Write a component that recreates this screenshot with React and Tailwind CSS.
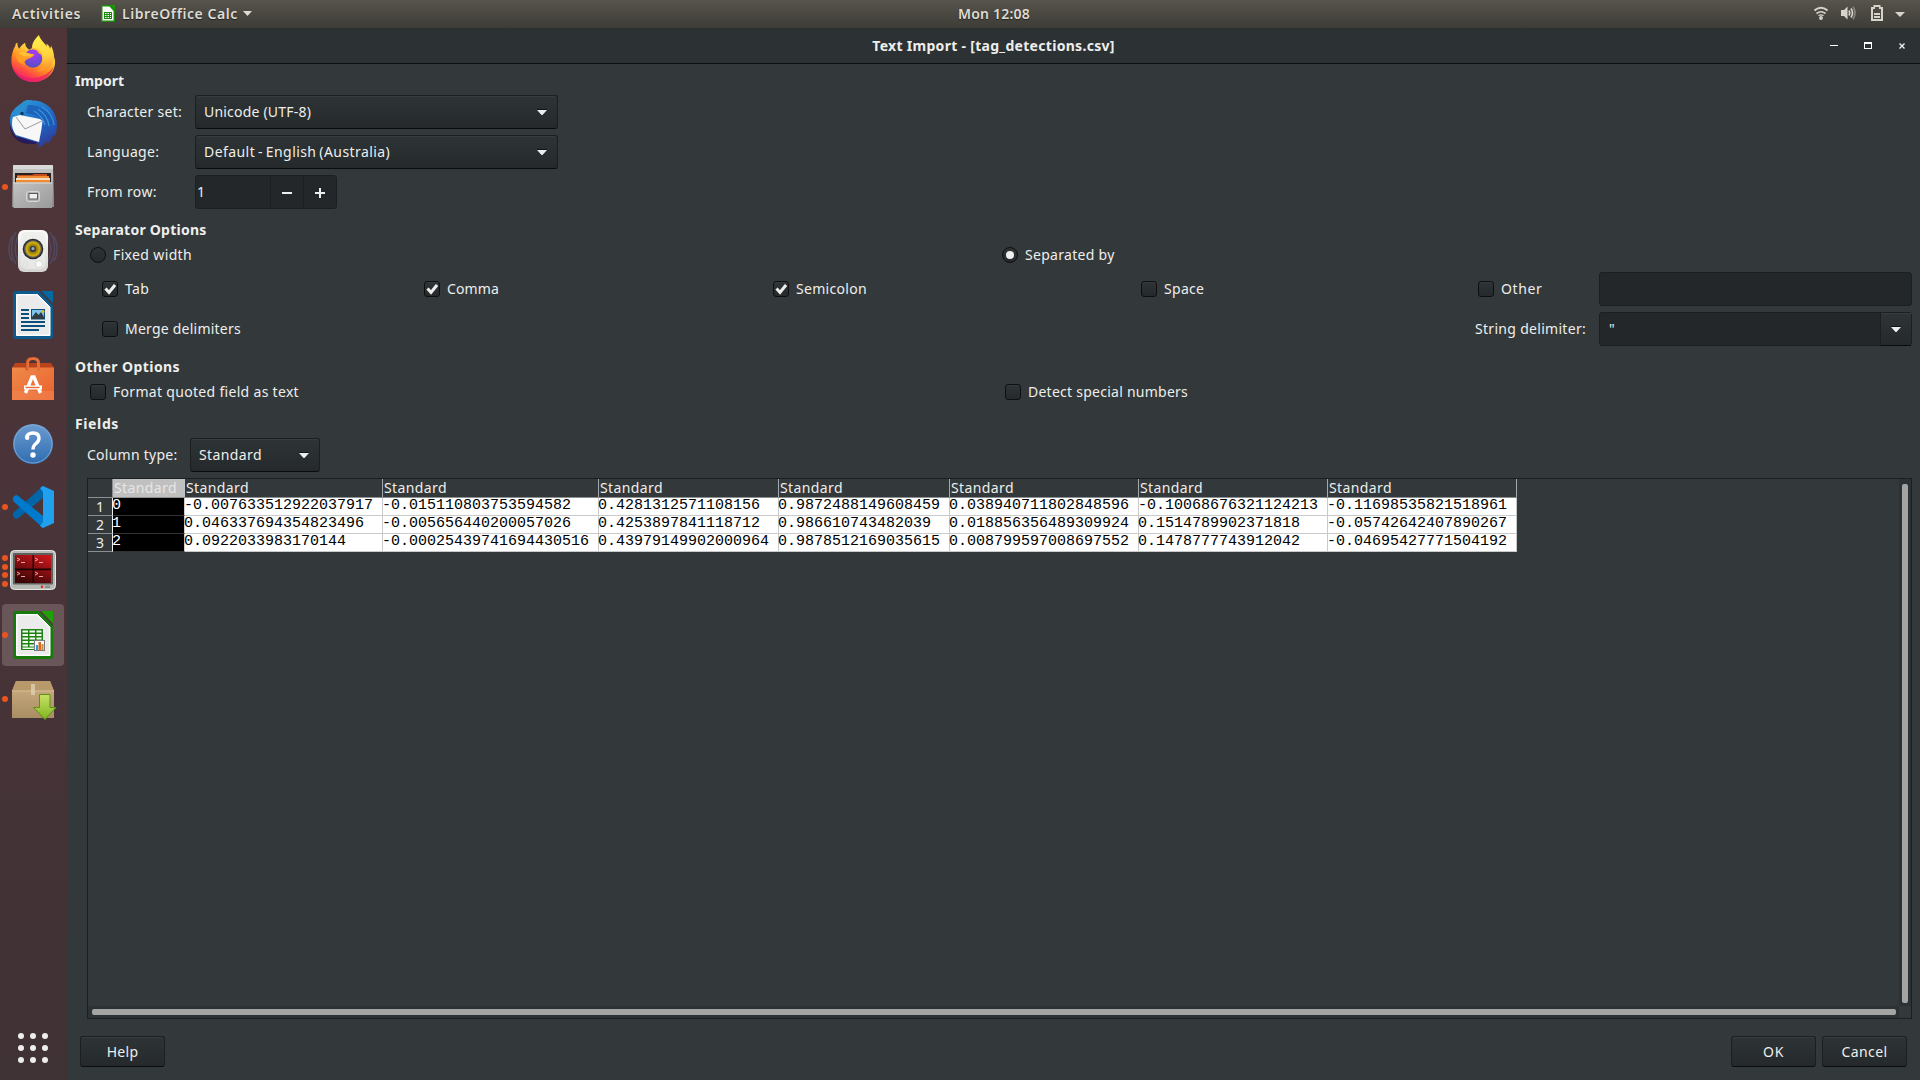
import React from "react";

function Firefox() {
  return (
    <svg width="48" height="48" viewBox="0 0 48 49" className="-mt-px">
      <defs>
        <linearGradient id="ffBody" x1="0.8" y1="0.05" x2="0.25" y2="1">
          <stop offset="0" stopColor="#fff44f" />
          <stop offset="0.3" stopColor="#ffc83a" />
          <stop offset="0.55" stopColor="#ff8a1e" />
          <stop offset="0.8" stopColor="#ff3f4e" />
          <stop offset="1" stopColor="#e01b78" />
        </linearGradient>
        <radialGradient id="ffGlobe" cx="0.55" cy="0.2" r="0.9">
          <stop offset="0" stopColor="#a83bf2" />
          <stop offset="0.55" stopColor="#7446da" />
          <stop offset="1" stopColor="#4a52b4" />
        </radialGradient>
        <linearGradient id="ffFlame" x1="0.5" y1="0" x2="0.6" y2="1">
          <stop offset="0" stopColor="#fff04d" />
          <stop offset="0.55" stopColor="#ffd53f" />
          <stop offset="1" stopColor="#ff8a2a" />
        </linearGradient>
      </defs>
      <path d="M29 10c2 2 5 4 8 5l2 4 4-1c3 5 3.500 6 3.500 10C46.500 39.500 36 48 24.500 48S2.500 39 2 27.500C1.800 20 4 14 6 11c0-2 1-3 2-3 0 3 1 5 2 6 1-2 4-5 6-6 0 3 1 5 4 7z" fill="url(#ffBody)" />
      <path d="M30 0c-4 4-7 8-7 13l7 3c5 4 6 7 5 12-1 5-4 8-8 9 9 2 18.500-4 18.500-14 0-4-1-8-3-12l-1 3c-1-3-2-4-4-5l1 3c-3-4-7-7-8.500-12z" fill="url(#ffFlame)" />
      <circle cx="24" cy="24" r="9.500" fill="url(#ffGlobe)" />
      <path d="M6 19c3-4 8-3 12-1 2 1 5 1 7.500 2-1 2-4 4-7 4.500-2 1-4 3-3 6-6-1-9-6-9.500-11.500z" fill="#ff9d25" />
      <path d="M9 18c4-2 7-1 10 1l6 1-4 2c-4 0-8 0-12-4z" fill="#ffc033" />
      <path d="M22 13c6 0 10 3 12 8l-4-2-2-3z" fill="#ffb52b" />
      <path d="M3 32c3 8 11 12 20 12 10 0 18-5 22-12-2 9-10 16-20.500 16S5 42 3 32z" fill="#e8186f" opacity="0.650" />
    </svg>
  );
}

function Thunderbird() {
  return (
    <svg width="50" height="50" viewBox="0 0 50 50" className="mt-0.5">
      <defs>
        <linearGradient id="tbBody" x1="0.2" y1="0" x2="0.8" y2="1">
          <stop offset="0" stopColor="#2a9bdc" />
          <stop offset="0.5" stopColor="#2068c4" />
          <stop offset="1" stopColor="#2f3a98" />
        </linearGradient>
      </defs>
      <path d="M15 3c3-2 6-2.500 9-1.500C38 1 49 12 49 26c0 5-1 9-3 12l-1-2c-1 4-3 7-6 9v-3c-3 4-6 6-10 6.500l3-4C24 45 12 42 7 36 2 31 1 22 3 15c3-6 7-8 12-12z" fill="url(#tbBody)" />
      <path d="M15 3c3-2 6-2.500 9-1.500-3 1-6 4-7 8-1 6-7 8-10 9 0-6 3-11 8-15.500z" fill="#2b8fcf" />
      <path d="M20 6c14 0 25 8 27 20l-4 9V26l-5 10-2-14-9-6-9-2z" fill="#1c5cb4" opacity="0.800" />
      <path d="M34 8c7 4 11 10 12 18M30 10c6 4 10 9 11 17M26 12c5 3 9 7 11 14" fill="none" stroke="#3a92dc" strokeWidth="1.300" />
      <path d="M2 24c1 10 6 16 14 19l6 2C10 45 2 36 2 26z" fill="#1f1552" />
      <path d="M3 27l5 10 22 7-3 1C14 45 6 38 3 27z" fill="#241a5e" />
      <path d="M5 18l7-2 20 4 2.500 2-1 8-2.500 13L8 36c-4-5-5-12-3-18z" fill="#f7f7f8" />
      <path d="M8 18l9 12 17-8" fill="none" stroke="#9a9ca0" strokeWidth="1" />
      <circle cx="14" cy="14.500" r="1.800" fill="#123a63" />
    </svg>
  );
}

function Files() {
  return (
    <svg width="44" height="46" viewBox="0 0 44 46">
      <defs>
        <linearGradient id="fiBack" x1="0" y1="0" x2="0" y2="1">
          <stop offset="0" stopColor="#c9c9c9" />
          <stop offset="1" stopColor="#8c8c8c" />
        </linearGradient>
        <linearGradient id="fiFront" x1="0" y1="0" x2="1" y2="1">
          <stop offset="0" stopColor="#c2c2c2" />
          <stop offset="1" stopColor="#9a9a9a" />
        </linearGradient>
      </defs>
      <path d="M2 2q0-1 1-1h38q1 0 1 1l1 41H1z" fill="url(#fiBack)" />
      <path d="M2 5h40V2q0-1-1-1H3q-1 0-1 1z" fill="#d9d9d9" />
      <path d="M4 9h36v10H4z" fill="#2a211e" />
      <path d="M6 11h15l2-1h13v3H6z" fill="#c44f1c" />
      <path d="M6 12h32v2H6zM5 16h34v3H5z" fill="#ef8a35" />
      <path d="M5 14h34v2H5z" fill="#f7ddbf" />
      <path d="M2.500 18.500h38.500v25.500H2.500z" fill="url(#fiFront)" />
      <path d="M2.500 18.500h38.500v1H2.500z" fill="#dedede" />
      <rect x="15.500" y="27.500" width="13" height="10" rx="2" fill="#b3b3b3" stroke="#d6d6d6" />
      <rect x="18" y="29.500" width="8.500" height="5.500" fill="#f0f0f0" stroke="#5b5b5b" />
    </svg>
  );
}

function Speaker() {
  return (
    <svg width="50" height="46" viewBox="0 0 50 46">
      <defs>
        <linearGradient id="spBox" x1="0" y1="0" x2="0" y2="1">
          <stop offset="0" stopColor="#fbfbfb" />
          <stop offset="1" stopColor="#d4d4d2" />
        </linearGradient>
      </defs>
      <g fill="none" stroke="#5671a8" strokeWidth="1.500" opacity="0.350">
        <path d="M8 4C2 14 2 28 8 36M4 8c-4 9-4 18 0 25M11 7C6 15 6 27 11 35M42 4c6 10 6 24 0 32M46 8c4 9 4 18 0 25M39 7c5 8 5 20 0 28" />
      </g>
      <rect x="10" y="2" width="30" height="42" rx="6" fill="url(#spBox)" />
      <rect x="13" y="4" width="24" height="37" rx="5" fill="#ececea" opacity="0.700" />
      <circle cx="25" cy="21" r="10.300" fill="#2b2c31" />
      <circle cx="25" cy="21" r="9" fill="#56585e" />
      <circle cx="25" cy="21" r="7.700" fill="#cba90e" />
      <circle cx="25" cy="21" r="5.500" fill="#a98a08" />
      <circle cx="25" cy="21" r="3.300" fill="#3c3f46" />
      <circle cx="25" cy="20.500" r="1.500" fill="#a7abb3" />
      <circle cx="31" cy="36" r="3.500" fill="#fafafa" stroke="#cfcfcf" strokeWidth="0.700" />
      <rect x="15" y="34" width="4" height="5" fill="none" stroke="#dadada" strokeWidth="0.700" />
    </svg>
  );
}

function DocShape({ dark, corner }) {
  return (
    <g>
      <path d="M3 0h23l14 14v31q0 3-3 3H3q-3 0-3-3V3q0-3 3-3z" fill={dark} />
      <path d="M28 0h12v12.500z" fill={corner} />
      <path d="M26 0h2l12 12.500V15z" fill="#493437" opacity="0.750" />
      <path d="M3.500 3.500h21l12.500 12.500v28.500H3.500z" fill="#f3f3f3" stroke="#ffffff" strokeWidth="1" />
      <path d="M5 5h19l12 12v26H5z" fill="#e9e9e9" opacity="0.800" />
    </g>
  );
}

function Writer() {
  return (
    <svg width="40" height="48" viewBox="0 0 40 48">
      <DocShape dark="#0d5a8c" corner="#0369a3" />
      <path d="M8 18h8v2H8zM8 22h8v2H8zM8 26h8v2H8zM8 30h24v2H8zM8 34h24v2H8zM8 38h18v2H8z" fill="#0b4f7c" />
      <rect x="18.500" y="18.500" width="13" height="9.500" fill="#7cc4ea" stroke="#0b4f7c" />
      <path d="M19 28v-2l4-5 2.500 3 2.500-3 3 5v2z" fill="#2f3c44" />
      <circle cx="30" cy="20.500" r="1.500" fill="#e9b52a" />
    </svg>
  );
}

function Calc() {
  return (
    <svg width="40" height="48" viewBox="0 0 40 48">
      <DocShape dark="#187a0c" corner="#1fa003" />
      <rect x="8" y="18" width="22" height="21" fill="#1d8410" />
      <g fill="#f4f8f3">
        {[19.5, 23, 26.5, 30, 33.5].map((y) => (
          <g key={y}>
            <rect x="9.500" y={y} width="5.500" height="2" />
            <rect x="16.500" y={y} width="5.500" height="2" />
            <rect x="23.500" y={y} width="5" height="2" />
          </g>
        ))}
        <rect x="9.500" y="36.500" width="12" height="1.500" />
      </g>
      <rect x="21.500" y="29.500" width="10" height="10" fill="#fafafa" stroke="#7b7b7b" />
      <path d="M23 34h2v5h-2z" fill="#2d9bd8" />
      <path d="M25.500 31h2.500v8h-2.500z" fill="#e0641a" />
      <path d="M28.500 33h2v6h-2z" fill="#c08a3e" />
    </svg>
  );
}

function Software() {
  return (
    <svg width="42" height="44" viewBox="0 0 42 44">
      <defs>
        <linearGradient id="swBag" x1="0" y1="0" x2="1" y2="1">
          <stop offset="0" stopColor="#f08a4b" />
          <stop offset="1" stopColor="#e9602c" />
        </linearGradient>
      </defs>
      <path d="M3 6h36l3 5H0z" fill="#b9431a" />
      <path d="M0 10.500h42V43H0z" fill="url(#swBag)" />
      <path d="M0 34h42v9H0z" fill="#f28a55" opacity="0.500" />
      <path d="M15.500 14V6q0-4.500 5.500-4.500T26.500 6v8" fill="none" stroke="#e5703a" strokeWidth="3" />
      <path d="M14 13V6q0-6 7-6" fill="none" stroke="#b5461c" strokeWidth="0.800" />
      <path d="M13.500 36l6.500-16h2l6.500 16" fill="none" stroke="#fff" strokeWidth="3.400" />
      <path d="M12 30.500h18" stroke="#fff" strokeWidth="4" />
      <path d="M13.500 30.500h14" stroke="#ea6a35" strokeWidth="1.400" />
    </svg>
  );
}

function HelpIcon() {
  return (
    <svg width="42" height="42" viewBox="0 0 42 42" className="mt-0.5">
      <defs>
        <linearGradient id="hpDisc" x1="0" y1="0" x2="0" y2="1">
          <stop offset="0" stopColor="#6b9bd0" />
          <stop offset="1" stopColor="#2f6db0" />
        </linearGradient>
      </defs>
      <circle cx="21" cy="21" r="20" fill="url(#hpDisc)" />
      <circle cx="21" cy="21" r="19" fill="none" stroke="#8db3dd" strokeWidth="1" opacity="0.700" />
      <path d="M14.500 15q0.500-5 6.500-5t6 5.200q0 3-3 5.300t-3 6" fill="none" stroke="#fff" strokeWidth="3.400" />
      <circle cx="15.200" cy="14.700" r="2.200" fill="#fff" />
      <circle cx="21" cy="32" r="2.700" fill="#fff" />
    </svg>
  );
}

function Code() {
  return (
    <svg width="42" height="42" viewBox="0 0 42 42">
      <path d="M31 0L1 27v3q1 3 4 3L31 12z" fill="#0065a9" />
      <path d="M31 42L1 15v-3q1-3 4-3l26 21z" fill="#007acc" />
      <path d="M31 0l11 5v32l-11 5-3-2 3-4V6l-3-4z" fill="#22a0f0" />
    </svg>
  );
}

function Terminal() {
  return (
    <svg width="46" height="42" viewBox="0 0 46 42">
      <defs>
        <linearGradient id="tmRed" x1="0.8" y1="0" x2="0.3" y2="1">
          <stop offset="0" stopColor="#c9171c" />
          <stop offset="1" stopColor="#3a0506" />
        </linearGradient>
      </defs>
      <rect x="0.500" y="0.500" width="45" height="39" rx="4" fill="#b8bab5" stroke="#e3e4e0" />
      <rect x="3" y="3" width="40" height="31.500" rx="1" fill="#5d605b" />
      <rect x="5" y="5" width="36" height="28" fill="url(#tmRed)" />
      <path d="M22.500 5h1.500v28h-1.500zM5 18.500h36v1.800H5z" fill="#1c0203" />
      <g fill="none" stroke="#f0a0a0" strokeWidth="1">
        <path d="M7 8l3 1.500L7 11M11 12.500h4M25 8l3 1.500-3 1.500M29 12.500h4M7 22l3 1.500L7 25M11 26.500h4M25 22l3 1.500-3 1.500M29 26.500h4" />
      </g>
      <circle cx="32" cy="36.700" r="1.200" fill="#d22" />
      <path d="M35 35.500h5v2.500h-5z" fill="#8f918d" />
    </svg>
  );
}

function Package() {
  return (
    <svg width="46" height="40" viewBox="0 0 46 40" className="mt-1 ml-[3px]">
      <defs>
        <linearGradient id="pkFace" x1="0" y1="0" x2="0" y2="1">
          <stop offset="0" stopColor="#cdb084" />
          <stop offset="1" stopColor="#a98d63" />
        </linearGradient>
        <linearGradient id="pkArrow" x1="0" y1="0" x2="0" y2="1">
          <stop offset="0" stopColor="#c7e265" />
          <stop offset="1" stopColor="#7fb51f" />
        </linearGradient>
      </defs>
      <path d="M4 0h34l4 10v27H0V10z" fill="url(#pkFace)" />
      <path d="M4 0h34l4 10H0z" fill="#b8996c" />
      <path d="M0 10h42" stroke="#d8c096" strokeWidth="1" />
      <path d="M19 3h4v11h-4z" fill="#e0cfae" opacity="0.800" />
      <path d="M27.500 13.500h10.500v13h6L33 38.500 21.500 26.500h6z" fill="url(#pkArrow)" stroke="#5f9213" strokeWidth="1" />
    </svg>
  );
}

const dock = [
  { icon: <Firefox />, dots: 0 },
  { icon: <Thunderbird />, dots: 0 },
  { icon: <Files />, dots: 1 },
  { icon: <Speaker />, dots: 0 },
  { icon: <Writer />, dots: 0 },
  { icon: <Software />, dots: 0 },
  { icon: <HelpIcon />, dots: 0 },
  { icon: <Code />, dots: 1 },
  { icon: <Terminal />, dots: 4 },
  { icon: <Calc />, dots: 1, active: true },
  { icon: <Package />, dots: 1 },
];

function Dock() {
  return (
    <aside className="flex w-[67px] shrink-0 flex-col bg-linear-to-b from-[#503538] via-[#493439] to-[#3f3234]">
      <div className="-mt-px flex flex-col">
        {dock.map((d, i) => (
          <div key={i} className="flex h-16 items-center">
            <div className={d.active ? "ml-0.5 flex h-[62px] w-[62px] items-center rounded bg-[#685659]" : "ml-0.5 flex h-[62px] w-[62px] items-center"}>
              <div className="flex w-1.5 shrink-0 flex-col items-center gap-[2.500px]">
                {Array.from({ length: d.dots }, (_, k) => (
                  <span key={k} className="h-1.5 w-1.5 rounded-full bg-[#e95420]" />
                ))}
              </div>
              <div className="flex w-[50px] shrink-0 justify-center">{d.icon}</div>
            </div>
          </div>
        ))}
      </div>
      <div className="mt-auto mb-[17px] ml-[18px] grid w-[30px] grid-cols-3 gap-1.5">
        {Array.from({ length: 9 }, (_, k) => (
          <span key={k} className="h-1.5 w-1.5 rounded-full bg-[#eeeeec]" />
        ))}
      </div>
    </aside>
  );
}

function TopBar() {
  return (
    <header className="flex h-7 shrink-0 items-center bg-linear-to-b from-[#57544c] to-[#3d3c37] font-semibold text-[#dfdbd2] [text-shadow:0_1px_1px_rgba(0,0,0,0.5)]">
      <div className="flex w-[958px] items-center pl-3">
        <span className="w-[89px] tracking-[0.66px]">Activities</span>
        <svg width="14" height="17" viewBox="0 0 14 17" className="-mt-0.5 mr-[7px]">
          <path d="M0 0h9l5 5v12H0z" fill="#1c8a0c" />
          <path d="M1.500 1.500h7l4 4.500v9.500h-11z" fill="#fbfbfb" />
          <path d="M9 0h5v5z" fill="#159b00" />
          <path d="M3 7h8v7H3z" fill="#1c8a0c" />
          <path d="M4 8h1.500v1H4zM6.500 8H8v1H6.500zM9 8h1v1H9zM4 10h1.500v1H4zM6.500 10H8v1H6.500zM9 10h1v1H9zM4 12h1.500v1H4zM6.500 12H8v1H6.500zM9 12h1v1H9z" fill="#fff" />
        </svg>
        <span className="w-[121px] tracking-[0.58px]">LibreOffice Calc</span>
        <svg width="9" height="5" viewBox="0 0 9 5" className="-mt-px"><path d="M0 0h9L4.500 5z" fill="#dfdbd2" /></svg>
      </div>
      <span className="w-[72px] tracking-[0.21px]">Mon 12:08</span>
      <div className="flex flex-1 items-center justify-end pr-[15px] pb-0.5">
        <svg width="14" height="14" viewBox="0 0 14 14" className="mr-[13px]" fill="none" stroke="#d6d3cb" strokeWidth="2">
          <path d="M0.500 4.500q6.500-5.500 13 0" />
          <path d="M2.500 7.500q4.500-3.500 9 0" strokeWidth="1.600" />
          <path d="M4.500 9.800q2.500-1.800 5 0" strokeWidth="1.400" />
          <circle cx="7" cy="12" r="1.900" fill="#d6d3cb" stroke="none" />
        </svg>
        <svg width="15" height="14" viewBox="0 0 15 14" className="mr-[15px]">
          <path d="M0 4h3l3.500-3.500v13L3 10H0z" fill="#d6d3cb" />
          <path d="M8 4.500q1.500 2.500 0 5M10 2.500q3 4.500 0 9" fill="none" stroke="#d6d3cb" strokeWidth="1.700" />
          <path d="M12 0.700q4 6.300 0 12.600" fill="none" stroke="#85837a" strokeWidth="1.700" />
        </svg>
        <svg width="12" height="16" viewBox="0 0 12 16" className="mr-[12px]">
          <path d="M2.500 0h7v2H12v14H0V2h2.500zM2 4v10h8V4H8V2H4v2z" fill="#d6d3cb" fillRule="evenodd" />
          <path d="M3 8h6v2H3zM3 11h6v2H3z" fill="#d6d3cb" />
        </svg>
        <svg width="10" height="5" viewBox="0 0 10 5" className="mt-0.5"><path d="M0 0h10L5 5z" fill="#d6d3cb" /></svg>
      </div>
    </header>
  );
}

function Arrow() {
  return (
    <svg width="10" height="6" viewBox="0 0 10 6" className="shrink-0">
      <path d="M0 0h10v1L5.500 6h-1L0 1z" fill="#eeeeec" />
      <path d="M0 0h10v1H0z" fill="#111314" />
    </svg>
  );
}

function Combo({ className, children }) {
  return (
    <div className={"flex h-[34px] items-center justify-between rounded-[3px] border border-[#1c1f20] border-b-[#0b0c0d] bg-linear-to-b from-[#2e3436] to-[#25292b] pl-2 pr-2.5 shadow-[inset_0_1px_0_#383e40] " + className}>
      {children}
      <Arrow />
    </div>
  );
}

function Check({ on }) {
  return (
    <span className="flex h-4 w-4 shrink-0 items-center justify-center rounded-[3px] border border-[#0d0f10] bg-linear-to-b from-[#2e3436] to-[#25292b] shadow-[inset_0_1px_0_#363c3e]">
      {on && (
        <svg width="12" height="12" viewBox="0 0 12 12">
          <path d="M1.500 5.500L5 9.500 11 2" fill="none" stroke="#eeeeec" strokeWidth="3" />
        </svg>
      )}
    </span>
  );
}

function Radio({ on }) {
  return (
    <span className="flex h-4 w-4 shrink-0 items-center justify-center rounded-full border border-[#0d0f10] bg-linear-to-b from-[#2e3436] to-[#25292b]">
      {on && <span className="h-2 w-2 rounded-full bg-[#eeeeec]" />}
    </span>
  );
}

function Option({ box, label, className }) {
  return (
    <div className={"flex shrink-0 items-center gap-[7px] " + className}>
      {box}
      <span className="whitespace-nowrap">{label}</span>
    </div>
  );
}

const columns = [
  ["0", "1", "2"],
  ["-0.007633512922037917", "0.046337694354823496", "0.0922033983170144"],
  ["-0.015110803753594582", "-0.005656440200057026", "-0.00025439741694430516"],
  ["0.4281312571108156", "0.4253897841118712", "0.43979149902000964"],
  ["0.9872488149608459", "0.986610743482039", "0.9878512169035615"],
  ["0.038940711802848596", "0.018856356489309924", "0.008799597008697552"],
  ["-0.10068676321124213", "0.1514789902371818", "0.1478777743912042"],
  ["-0.11698535821518961", "-0.05742642407890267", "-0.04695427771504192"],
];

const GRID = "grid grid-cols-[25px_72px_198px_216px_180px_171px_189px_189px_189px]";

function FieldsTable() {
  return (
    <div className="flex h-[541px] w-[1825px] flex-col border border-[#1b1f20]">
      <div className="flex flex-1">
        <div className="w-[1811px]">
          <div className={GRID + " h-[19px] w-[1429px] border-b border-[#8b8f91]"}>
            <span className="border-r border-[#8b8f91]" />
            {columns.map((_, i) => (
              <span
                key={i}
                className={
                  i === 0
                    ? "border-r border-[#c4c4c4] bg-[#c0c0c0] pl-px leading-[18px] tracking-[0.4px] text-[#e6e6e6]"
                    : "border-r border-[#a5a8a9] pl-px leading-[18px] tracking-[0.4px]"
                }
              >
                Standard
              </span>
            ))}
          </div>
          {[0, 1, 2].map((r) => (
            <div key={r} className={GRID + " h-[18px] w-[1429px]"}>
              <span className="border-r border-b border-r-[#eeeeee] border-b-[#8b8f91] pr-2 text-right leading-[17px]">{r + 1}</span>
              {columns.map((c, i) => (
                <span
                  key={i}
                  className={
                    i === 0
                      ? "border-r border-b border-r-[#d0d0d0] border-b-[#333333] bg-black -indent-px font-['Liberation_Mono',monospace] text-[15px] leading-[15px] text-white"
                      : "border-r border-b border-[#c8cacb] bg-white -indent-px font-['Liberation_Mono',monospace] text-[15px] leading-[15px] text-black"
                  }
                >
                  {c[r]}
                </span>
              ))}
            </div>
          ))}
        </div>
        <div className="flex w-3 justify-center bg-[#2c3133] pt-[5px] pb-[3px]">
          <div className="w-1.5 rounded-[2px] bg-[#a4a4a3]" />
        </div>
      </div>
      <div className="flex h-3">
        <div className="w-[1811px] bg-[#2c3133] py-[3px] pl-1 pr-[3px]">
          <div className="h-1.5 rounded-[2px] bg-[#a4a4a3]" />
        </div>
      </div>
    </div>
  );
}

function Button({ children }) {
  return (
    <button className="flex h-[31px] w-[85px] items-center justify-center rounded-[3px] border border-[#1c1f20] border-b-[#0b0c0d] bg-linear-to-b from-[#2e3436] to-[#25292b] shadow-[inset_0_1px_0_#383e40]">
      {children}
    </button>
  );
}

function Dialog() {
  return (
    <main className="flex w-[1853px] flex-col bg-[#33393b]">
      <div className="flex h-9 items-center border-b border-[#0c0e0f] bg-[#2c3133]">
        <span className="w-[90px]" />
        <span className="flex-1 text-center font-bold tracking-[0.3px]">Text Import - [tag_detections.csv]</span>
        <div className="flex w-[90px] items-center">
          <span className="mr-[26px] h-px w-2 bg-white" />
          <span className="mr-[27px] h-[7px] w-2 border border-t-2 border-white" />
          <svg width="6" height="6" viewBox="0 0 6 6"><path d="M0.500 0.500l5 5M5.500 0.500l-5 5" stroke="#eee" strokeWidth="1.400" /></svg>
        </div>
      </div>

      <div className="flex flex-1 flex-col pl-2 pt-2">
        <h2 className="h-[18px] font-bold leading-[18px]">Import</h2>
        <div className="mt-[5px] flex flex-col gap-1.5 pl-3">
          <div className="flex items-center">
            <span className="w-[108px] tracking-[0.27px]">Character set:</span>
            <Combo className="w-[363px]"><span className="tracking-[0.2px]">Unicode (UTF-8)</span></Combo>
          </div>
          <div className="flex items-center">
            <span className="w-[108px] tracking-[0.36px]">Language:</span>
            <Combo className="w-[363px]"><span className="tracking-[0.43px] [word-spacing:-1.2px]">Default - English (Australia)</span></Combo>
          </div>
          <div className="flex items-center">
            <span className="w-[108px] tracking-[0.4px]">From row:</span>
            <div className="flex h-[34px] w-[142px] items-stretch rounded-[3px] border border-[#1c1f20] bg-[#232729]">
              <span className="w-[75px] border-r border-[#1c1f20] pl-px leading-[32px]">1</span>
              <span className="flex w-[33px] items-center justify-center border-r border-[#1c1f20]">
                <span className="mt-0.5 h-0.5 w-2.5 bg-[#eeeeec]" />
              </span>
              <span className="flex w-[32px] items-center justify-center">
                <svg width="10" height="10" viewBox="0 0 10 10" className="mt-0.5"><path d="M4 0h2v4h4v2H6v4H4V6H0V4h4z" fill="#eeeeec" /></svg>
              </span>
            </div>
          </div>
        </div>

        <h2 className="mt-3 h-[18px] font-bold leading-[18px] tracking-[0.24px]">Separator Options</h2>
        <div className="mt-[7px] flex h-[18px] items-center pl-[15px]">
          <Option className="w-[912px] tracking-[0.36px]" box={<Radio />} label="Fixed width" />
          <Option className="tracking-[0.3px]" box={<Radio on />} label="Separated by" />
        </div>
        <div className="mt-2 flex h-[34px] items-center pl-[27px]">
          <Option className="w-[322px] tracking-[0.4px]" box={<Check on />} label="Tab" />
          <Option className="w-[349px] tracking-[0.13px]" box={<Check on />} label="Comma" />
          <Option className="w-[368px] tracking-[0.3px]" box={<Check on />} label="Semicolon" />
          <Option className="w-[337px] tracking-[0.3px]" box={<Check />} label="Space" />
          <Option className="w-[121px] tracking-[0.6px]" box={<Check />} label="Other" />
          <div className="h-[34px] w-[313px] rounded-[3px] border border-[#1c1f20] bg-[#232729]" />
        </div>
        <div className="mt-1.5 flex h-[34px] items-center pl-[27px]">
          <Option className="w-[1373px] tracking-[0.23px]" box={<Check />} label="Merge delimiters" />
          <span className="w-[124px] tracking-[0.3px]">String delimiter:</span>
          <div className="flex h-[34px] w-[313px] items-stretch rounded-[3px] border border-[#1c1f20] bg-[#232729]">
            <span className="flex-1 pl-[9px] leading-[32px]">"</span>
            <span className="-mb-px flex w-[31px] items-center justify-center border-l border-b border-l-[#1c1f20] border-b-[#0b0c0d] bg-linear-to-b from-[#2e3436] to-[#25292b] shadow-[inset_0_1px_0_#383e40]"><Arrow /></span>
          </div>
        </div>

        <h2 className="mt-3 h-[18px] font-bold leading-[18px] tracking-[0.42px]">Other Options</h2>
        <div className="mt-[7px] flex h-[18px] items-center pl-[15px]">
          <Option className="w-[915px] tracking-[0.31px]" box={<Check />} label="Format quoted field as text" />
          <Option className="tracking-[0.25px]" box={<Check />} label="Detect special numbers" />
        </div>

        <h2 className="mt-3.5 h-[18px] font-bold leading-[18px] tracking-[0.62px]">Fields</h2>
        <div className="mt-[5px] flex items-center pl-3">
          <span className="w-[103px] tracking-[0.25px]">Column type:</span>
          <Combo className="w-[130px]"><span className="tracking-[0.4px]">Standard</span></Combo>
        </div>
        <div className="mt-1.5 pl-3">
          <FieldsTable />
        </div>
        <div className="mt-[17px] flex pl-[5px] pr-[13px]">
          <Button><span className="tracking-[0.3px]">Help</span></Button>
          <div className="ml-auto flex gap-1.5">
            <Button><span className="tracking-[0.6px]">OK</span></Button>
            <Button><span className="tracking-[0.4px]">Cancel</span></Button>
          </div>
        </div>
      </div>
    </main>
  );
}

export default function App() {
  return (
    <div className="flex h-[1080px] w-[1920px] flex-col overflow-hidden bg-[#33393b] font-['Noto_Sans','Open_Sans',sans-serif] text-[14px] leading-[18px] text-[#eeeeec]">
      <TopBar />
      <div className="flex flex-1">
        <Dock />
        <Dialog />
      </div>
    </div>
  );
}
